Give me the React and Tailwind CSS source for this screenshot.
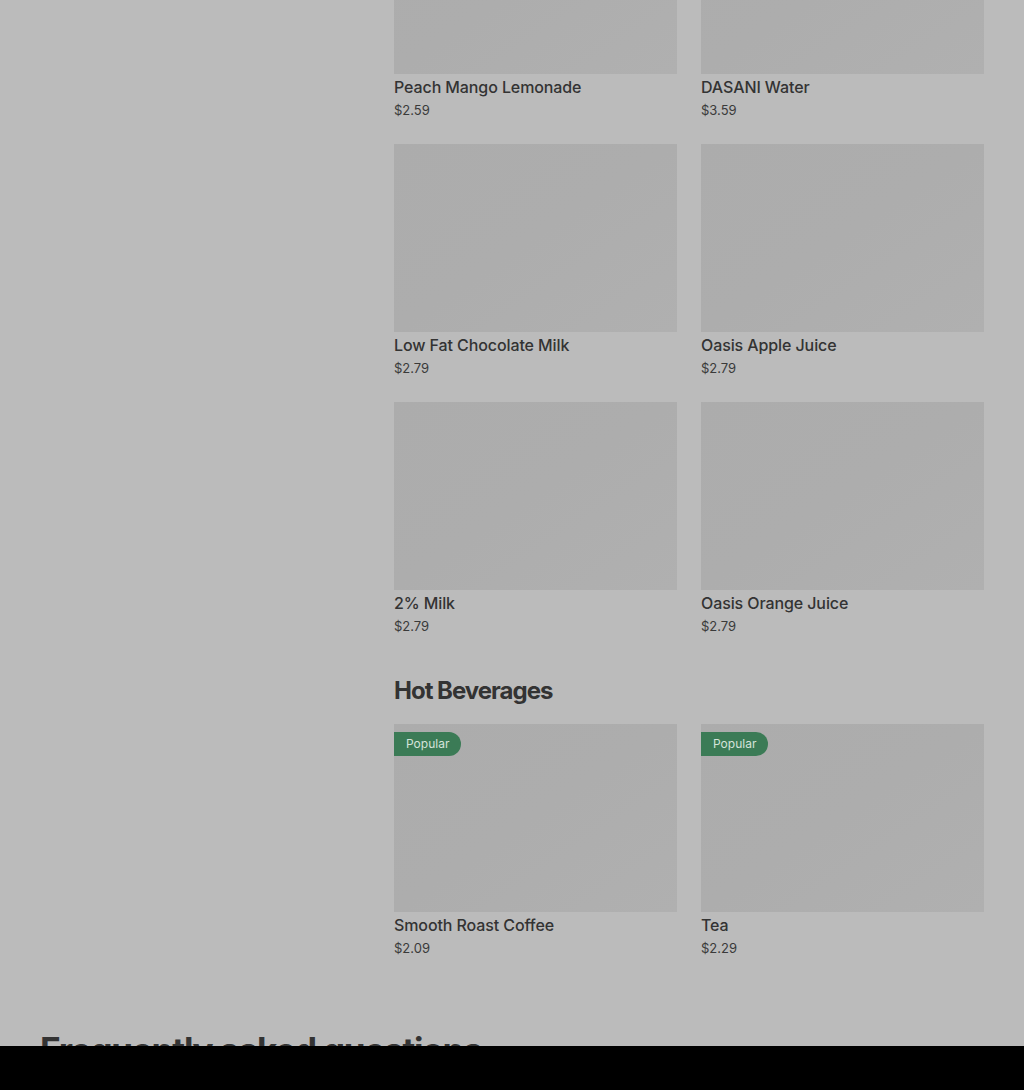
import React from 'react';

const cold = [
  { name: 'Peach Mango Lemonade', price: '$2.59' },
  { name: 'DASANI Water', price: '$3.59' },
  { name: 'Low Fat Chocolate Milk', price: '$2.79' },
  { name: 'Oasis Apple Juice', price: '$2.79' },
  { name: '2% Milk', price: '$2.79' },
  { name: 'Oasis Orange Juice', price: '$2.79' },
];

const hot = [
  { name: 'Smooth Roast Coffee', price: '$2.09', popular: true },
  { name: 'Tea', price: '$2.29', popular: true },
];

function ItemCard({ item }) {
  return (
    <div className="flex flex-col">
      <div className="relative h-[188px] w-full bg-gradient-to-br from-[#acacac] via-[#adadad] to-[#b0b0b0]">
        {item.popular && (
          <span className="absolute left-0 top-2 flex h-6 items-center rounded-r-full bg-[#3b7b56] pl-3 pr-3 text-xs text-[#d5e3da]">
            Popular
          </span>
        )}
      </div>
      <div className="mt-px text-base font-medium leading-6 tracking-[-0.1px] text-[#333333]">{item.name}</div>
      <div className="text-[13px] leading-[23px] text-[#3a3a3a]">{item.price}</div>
    </div>
  );
}

export default function App() {
  return (
    <div className="min-h-[1090px] overflow-hidden bg-[#bbbbbb] font-['Inter',sans-serif]">
      <div className="flex px-10">
        {/* sidebar space */}
        <div className="w-[354px] shrink-0"></div>

        <main className="-mt-[114px] flex-1">
          <div className="grid grid-cols-2 gap-x-6 gap-y-[22px]">
            {cold.map((item) => (
              <ItemCard key={item.name} item={item} />
            ))}
          </div>

          <h2 className="mt-[37px] mb-[17px] text-2xl font-bold leading-8 tracking-[-1px] text-[#333333]">
            Hot Beverages
          </h2>
          <div className="grid grid-cols-2 gap-x-6 gap-y-[22px]">
            {hot.map((item) => (
              <ItemCard key={item.name} item={item} />
            ))}
          </div>
        </main>
      </div>

      <div className="px-10 pt-[68px]">
        <h2 className="text-[35px] font-bold leading-[44px] tracking-[-1.2px] text-[#333333]">
          Frequently asked questions
        </h2>
      </div>

      <div className="fixed bottom-0 left-0 right-0 h-[44px] bg-black"></div>
    </div>
  );
}
